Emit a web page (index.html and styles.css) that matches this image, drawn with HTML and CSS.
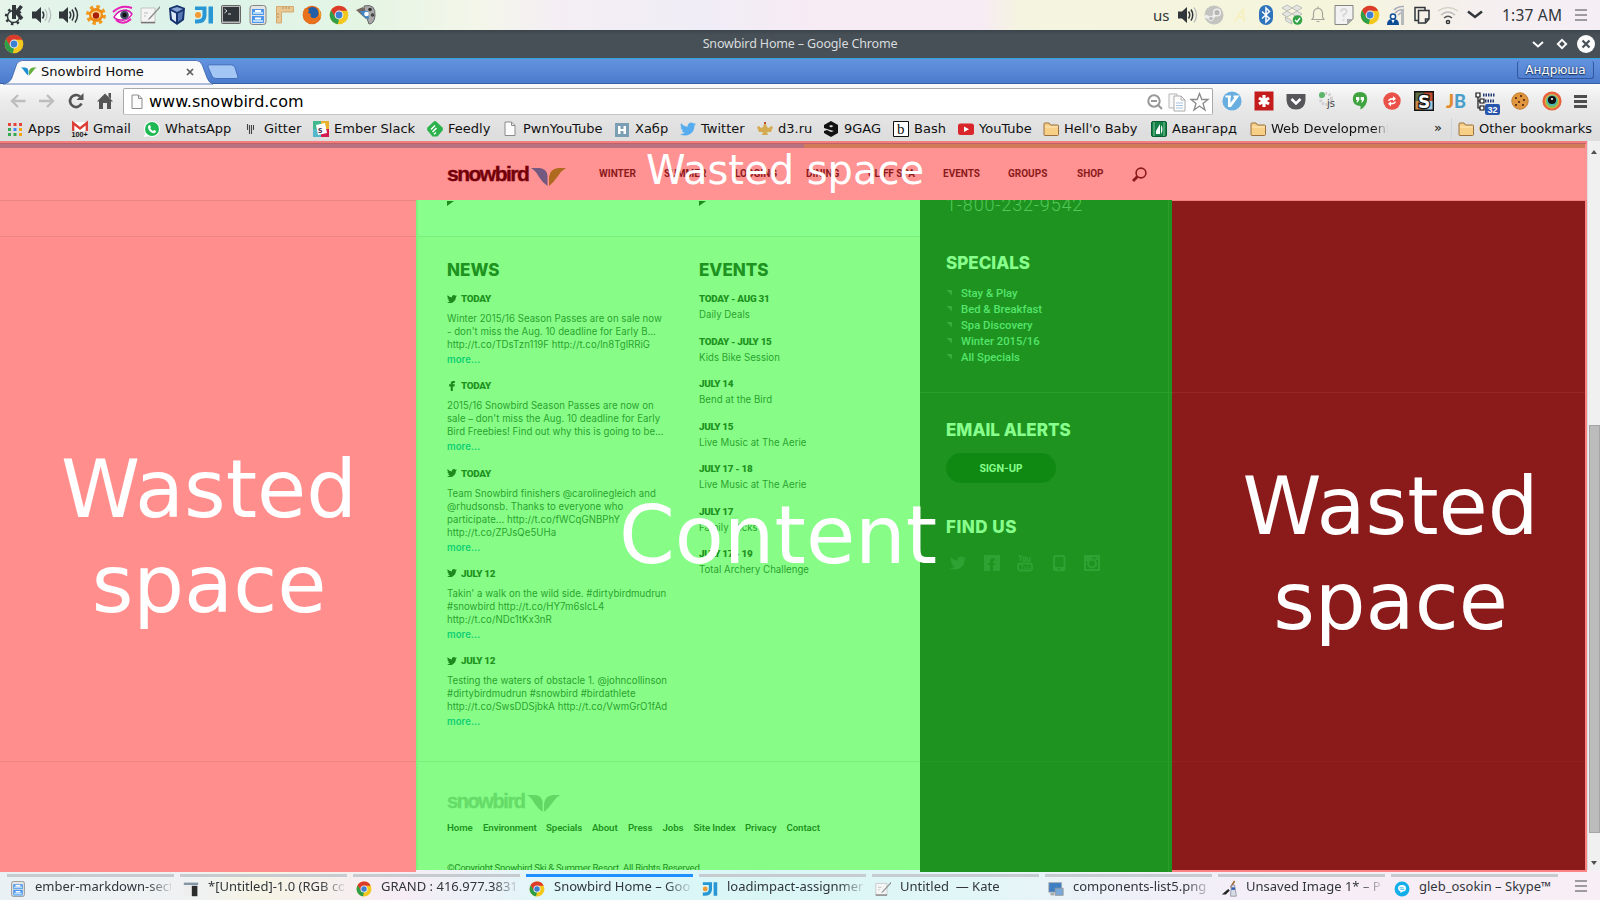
FILE: index.html
```html
<!DOCTYPE html>
<html lang="en">
<head>
<meta charset="utf-8">
<title>Snowbird Home</title>
<link rel="stylesheet" href="styles.css">
</head>
<body>
<svg class="defs" width="0" height="0">
  <defs>
    <symbol id="chrome" viewBox="0 0 20 20"><circle cx="10" cy="10" r="9.3" fill="#f3c81e"/><path d="M10 10 5.5 12.5 2 5.3A9.3 9.3 0 0 1 18.3 5.8L10 5.8Z" fill="#dc3b2c"/><path d="M2 5.3 6.4 12.4 10 14.2 8.8 19.2A9.3 9.3 0 0 1 2 5.3Z" fill="#2f9e48"/><circle cx="10" cy="10" r="4.4" fill="#f2f2f2"/><circle cx="10" cy="10" r="3.4" fill="#3d7fd0"/></symbol>
    <symbol id="speaker" viewBox="0 0 20 20"><path d="M0 6.500H4L9 2V18L4 13.500H0Z" fill="#31363b"/></symbol>
    <symbol id="tweet" viewBox="0 0 24 24"><path d="M24 4.6a10 10 0 0 1-2.8.8 5 5 0 0 0 2.1-2.7 10 10 0 0 1-3.1 1.2 4.9 4.9 0 0 0-8.4 4.5A14 14 0 0 1 1.700 3.200 4.900 4.900 0 0 0 3.200 9.700a5 5 0 0 1-2.200-.6 4.900 4.900 0 0 0 3.900 4.900 5 5 0 0 1-2.200.1 4.900 4.900 0 0 0 4.600 3.400A9.900 9.900 0 0 1 0 19.500 14 14 0 0 0 21.500 7.100 10 10 0 0 0 24 4.600z"/></symbol>
    <symbol id="wings" viewBox="0 0 38 20"><path d="M0 1H9Q16 2 16.500 9V19Q11 15 8 10Q5 4 0 1Z" class="wing-l"/><path d="M18 19V10Q19 2 27 1H35Q30 4 27 9Q23 15 18 19Z" class="wing-r"/></symbol>
    <symbol id="folder" viewBox="0 0 16 16"><path d="M1 13.500V3Q1 2 2 2H6L7.500 4H14.500Q15.500 4 15.500 5V13.500Q15.500 14.500 14.500 14.500H2Q1 14.500 1 13.500Z" fill="#f8cf86" stroke="#9a713e"/><path d="M2 6H15" stroke="#ffe9bd"/></symbol>
    <symbol id="cabinet" viewBox="0 0 20 20"><rect x="2" y=".5" width="16" height="19" rx="2.500" fill="#e4e4e4" stroke="#858585"/><path d="M4 4H16V10H4ZM4 11H16V18H4Z" fill="#4d98ea"/><path d="M5 8H15M5 16H15" stroke="#b4dafc" stroke-width="2"/><rect x="7" y="5" width="6" height="2" fill="#fff"/><rect x="7" y="12.500" width="6" height="2" fill="#fff"/></symbol>
    <symbol id="ji" viewBox="0 0 20 20"><path d="M1 1.500H12.500V11Q12 18.500 3 18.500H1V14.500H3Q8.500 14.500 8.500 10V5H1ZM14.500 1.500H19V18.500H14.500Z" fill="#2897d3"/><circle cx="4" cy="10" r="3" fill="#f29a33"/></symbol>
    <symbol id="kate" viewBox="0 0 20 20"><path d="M1 3H15V18H1Z" fill="#f5f5f5" stroke="#bababa" stroke-width=".8"/><path d="M1 17.500H15" stroke="#777" stroke-width="1.500"/><path d="M4 8H8M4 11H6" stroke="#bbb"/><path d="M20 1 9 13 7.500 15 10 14 20.500 2.500Z" fill="#8c8c8c"/></symbol>
    <symbol id="sheet" viewBox="0 0 12 16"><path d="M1 1H7.500L11 4.500V14.500H1Z" fill="#fbfbfb" stroke="#8c8c8c"/><path d="M7.500 1V4.500H11" fill="none" stroke="#8c8c8c"/></symbol>
  </defs>
</svg>

<div class="desktop">
  <header class="panel">
    <div class="launchers">
      <svg viewBox="0 0 20 20"><circle cx="8.500" cy="11.500" r="6" fill="none" stroke="#31363b" stroke-width="1.500"/><circle cx="8.500" cy="11.500" r="7.500" fill="none" stroke="#31363b" stroke-width="2.500" stroke-dasharray="2.500 3.400"/><path d="M7 0H11V14H7Z" fill="#31363b"/><path d="M16.500 1 11.500 7.500 17 14" fill="none" stroke="#31363b" stroke-width="3.500"/></svg>
      <svg viewBox="0 0 20 20"><use href="#speaker"/><path d="M10.500 6.500Q13 10 10.500 13.500" fill="none" stroke="#31363b" stroke-width="1.600"/><path d="M13 4Q17 10 13 16M16.500 2.500Q21 10 16.500 17.500" fill="none" stroke="#b9c0c0" stroke-width="1.300"/></svg>
      <svg viewBox="0 0 20 20"><use href="#speaker"/><path d="M10.500 6.500Q13 10 10.500 13.500M13 4.500Q16.500 10 13 15.500M16 2.500Q21 10 16 17.500" fill="none" stroke="#31363b" stroke-width="1.500"/></svg>
      <svg viewBox="0 0 20 20"><circle cx="10" cy="10" r="8" fill="none" stroke="#f09a20" stroke-width="4" stroke-dasharray="3.300 3"/><circle cx="10" cy="10" r="7" fill="#ee8a18"/><ellipse cx="10" cy="10" rx="5" ry="4" fill="#ffd98e"/><circle cx="10" cy="10.500" r="3.200" fill="#a92008"/></svg>
      <svg viewBox="0 0 20 20"><path d="M1 12Q5 5 13 5Q17 6 19 9Q15 16 8 15Q3 15 1 12Z" fill="#fff" stroke="#d91ab0" stroke-width="1.500"/><path d="M0 7Q8-1 19 3M3 15Q10 21 18 14" fill="none" stroke="#e620b8" stroke-width="2"/><circle cx="11.500" cy="10" r="4.300" fill="#454a68"/><circle cx="11.500" cy="10" r="2.200" fill="#111"/></svg>
      <svg viewBox="0 0 20 20"><use href="#kate"/></svg>
      <svg viewBox="0 0 20 20"><path d="M10 0 18 3 17 15 10 20 3 15 2 3Z" fill="#15336c"/><path d="M10 2 16 4 10 7 4 4Z" fill="#89a5d8"/><path d="M4 6 9 8.500V17L5 14Z" fill="#dce8f8"/><path d="M16 6 11 8.500V17L15 14Z" fill="#5878b5"/></svg>
      <svg viewBox="0 0 20 20"><use href="#ji"/></svg>
      <svg viewBox="0 0 20 20"><rect x=".5" y=".5" width="19" height="18" rx="1" fill="#bbb" stroke="#666"/><rect x="2" y="2" width="16" height="14.500" fill="#30363a"/><path d="M3.500 4 6 6 3.500 8M7 9H10" stroke="#ddd" fill="none"/></svg>
      <svg viewBox="0 0 20 20"><use href="#cabinet"/></svg>
      <svg viewBox="0 0 20 20"><path d="M1.500 1.500H18.500V7H6.500V18H1.500Z" fill="#e9c792" stroke="#d3ab70"/><path d="M8 2V4M11 2V4M14 2V4M2 9H4M2 12H4" stroke="#b8935a"/></svg>
      <svg viewBox="0 0 20 20"><circle cx="10" cy="10" r="9.300" fill="#e0641a"/><circle cx="10.500" cy="8" r="6" fill="#225fa8"/><path d="M1 7Q1 18 10 19Q18 18 18.500 8Q15 14 11 13Q7 12 9 9L6 8 7 5 3 3Z" fill="#e8731c"/><path d="M16 3Q20 8 18 13Q17 7 16 3Z" fill="#f7c02b"/></svg>
      <svg viewBox="0 0 20 20"><use href="#chrome"/></svg>
      <svg viewBox="0 0 20 20"><path d="M0 5 7 2 13 12 10 14Z" fill="#75685e"/><path d="M8 1Q20-2 19 11Q18 19 13 19L9 8Z" fill="#a8a8a8" stroke="#666"/><circle cx="14" cy="4.500" r="1.800" fill="#333"/><circle cx="16.500" cy="10" r="1.800" fill="#444"/><path d="M4 6H12L13 14Q8 14 4 6Z" fill="#3e86cc"/><circle cx="10.500" cy="9" r="2.300" fill="#fff"/></svg>
    </div>
    <div class="tray">
      <span class="layout-code">us</span>
      <div class="tray-icons">
        <svg viewBox="0 0 20 20"><use href="#speaker"/><path d="M10.500 6.500Q13 10 10.500 13.500M13 4.500Q16.500 10 13 15.500" fill="none" stroke="#31363b" stroke-width="1.500"/><path d="M16 2.500Q21 10 16 17.500" fill="none" stroke="#bbb" stroke-width="1.300"/></svg>
        <svg viewBox="0 0 20 20"><circle cx="10" cy="10" r="9.500" fill="#c3c3bf"/><path d="M1 11 7 13.500M8 13 13 8" stroke="#eee" stroke-width="3"/><circle cx="13" cy="7.500" r="3.300" fill="#b5b5b2" stroke="#eee" stroke-width="1.500"/><circle cx="7" cy="13.500" r="2.300" fill="#bbb" stroke="#eee"/></svg>
        <svg viewBox="0 0 20 20"><path d="M4 17 13 4 14 17M7 12H14" fill="none" stroke="#f6f0c2" stroke-width="2"/></svg>
        <svg viewBox="0 0 20 20"><rect x="3" y="0" width="14" height="20" rx="7" fill="#2e73bb"/><path d="M6 6.500 13.500 13.500 10 17V3L13.500 6.500 6 13.500" fill="none" stroke="#fff" stroke-width="1.500"/></svg>
        <svg viewBox="0 0 20 20"><path d="M5 0 10 3 5 6 0 3ZM15 0 20 3 15 6 10 3ZM5 6 10 9 5 12 0 9ZM15 6 20 9 15 12 10 9ZM3 12 9 15 10 19 4 16Z" fill="#e4e4e0" stroke="#aaa" stroke-width=".7"/><circle cx="15.500" cy="15" r="4.800" fill="#32a246"/><path d="M13 15 15 17 18 13" fill="none" stroke="#fff" stroke-width="1.400"/></svg>
        <svg viewBox="0 0 20 20"><path d="M4 14.500H16L14.500 12V8Q14 3.500 10 3.500Q6 3.500 5.500 8V12ZM8.500 16.500H11.500M10 3V1.500" fill="none" stroke="#a4a69b" stroke-width="1.200"/></svg>
        <svg viewBox="0 0 20 20"><path d="M1 .5H19V14L13 19.500H1Z" fill="#f2f2f2" stroke="#777" stroke-width=".9"/><path d="M7 7Q7 4 10 4Q13 4 12.500 7Q12 9 9.500 10V12M9.500 14V16" fill="none" stroke="#d8d8d8" stroke-width="2"/><path d="M13 19.500V14H19Z" fill="#aaa"/></svg>
        <svg viewBox="0 0 20 20"><use href="#chrome"/></svg>
        <svg viewBox="0 0 20 20"><path d="M8 5Q12 1 18 1.500M9 8Q13 4 18 4.500M12 10Q15 7 18 7.500" fill="none" stroke="#aab" stroke-width="1.500"/><path d="M15 4H18V20H15Z" fill="#b6babd"/><circle cx="7" cy="11.500" r="2.600" fill="#fff" stroke="#0b4c94" stroke-width="1.500"/><path d="M1 20Q1 13.500 7 14.500Q13 13.500 13 20Z" fill="#0b4c94"/><path d="M5.500 15H8.500L7 18.500Z" fill="#fff"/></svg>
        <svg viewBox="0 0 20 20"><path d="M6 15.500H3V2.500H13V5M6.500 5.500H17V14L13.500 18H6.500ZM17 14H13.500V18" fill="none" stroke="#31363b" stroke-width="1.500"/></svg>
        <svg viewBox="0 0 20 20"><path d="M0 6Q10-1 20 6" fill="none" stroke="#d2d2c6" stroke-width="1.500"/><path d="M3 10Q10 4 17 10" fill="none" stroke="#bbb" stroke-width="1.500"/><path d="M6 13Q10 9.500 14 13" fill="none" stroke="#555" stroke-width="1.500"/><circle cx="10" cy="17" r="1.600" fill="none" stroke="#31363b" stroke-width="1.500"/></svg>
      </div>
      <svg class="chevron" viewBox="0 0 16 10"><path d="M1 1.500 8 7 15 1.500" fill="none" stroke="#31363b" stroke-width="2.500"/></svg>
      <time class="clock">1:37 AM</time>
      <i class="burger"></i>
    </div>
  </header>

  <div class="titlebar">
    <svg class="title-icon" viewBox="0 0 20 20"><use href="#chrome"/></svg>
    <span class="title-text">Snowbird Home – Google Chrome</span>
    <svg class="win-buttons" viewBox="0 0 64 20"><path d="M2 8 7 12.500 12 8" fill="none" stroke="#fcfcfc" stroke-width="2"/><path d="M31 5.800 35.200 10 31 14.200 26.800 10Z" fill="none" stroke="#fcfcfc" stroke-width="1.900"/><circle cx="55" cy="10" r="9" fill="#fcfcfc"/><path d="M51.500 6.500 58.500 13.500M58.500 6.500 51.500 13.500" stroke="#475057" stroke-width="2.200"/></svg>
  </div>

  <div class="tabstrip">
    <div class="tab">
      <svg class="tab-shape" viewBox="0 0 214 26" preserveAspectRatio="none"><path d="M0 26Q7 25 9 20L14 6Q16 2.500 20 2.500H197Q201 2.500 203 7L208 20Q210 25 214 26Z" fill="#fafafa" stroke="#3a62aa" stroke-width=".8"/></svg>
      <svg class="tab-fav" viewBox="0 0 38 20"><use href="#wings"/></svg>
      <span class="tab-label">Snowbird Home</span>
      <svg class="tab-x" viewBox="0 0 8 8"><path d="M1 1 7 7M7 1 1 7" stroke="#5c5c5c" stroke-width="1.700"/></svg>
    </div>
    <svg class="new-tab" viewBox="0 0 32 16"><path d="M2.500 .8H24Q27 .8 28 3.500L31 13Q31.300 14.500 29 14.500H9Q6 14.500 5 12L1 3Q.5 .8 2.500 .8Z" fill="#a4c6f5" stroke="#426fbc"/></svg>
    <span class="profile">Андрюша</span>
  </div>

  <div class="chrome-bars">
    <div class="toolbar">
      <div class="nav-buttons">
        <svg viewBox="0 0 20 20"><path d="M17.500 10H4M10 4 4 10 10 16" fill="none" stroke="#bdbdbd" stroke-width="2.300"/></svg>
        <svg viewBox="0 0 20 20"><path d="M2 10H16M10 4 16 10 10 16" fill="none" stroke="#bdbdbd" stroke-width="2.300"/></svg>
        <svg viewBox="0 0 20 20"><path d="M15.500 12.500A6 6 0 1 1 14 5.500" fill="none" stroke="#555" stroke-width="2.700"/><path d="M17.500 2V9H10.500Z" fill="#555"/></svg>
        <svg viewBox="0 0 20 20"><path d="M10 2.500 18 10.500H16V18H12V12H8V18H4V10.500H2ZM13.500 2H16V8L13.500 5.500Z" fill="#555"/></svg>
      </div>
      <div class="omnibox">
        <svg class="omni-page" viewBox="0 0 12 16"><use href="#sheet"/></svg>
        <span class="url">www.snowbird.com</span>
        <svg class="omni-icons" viewBox="0 0 64 20"><circle cx="9" cy="9" r="5.700" fill="none" stroke="#989898" stroke-width="2"/><path d="M6 9H12M13 13 17 17" stroke="#989898" stroke-width="2"/><path d="M24 2H32V16H24Z" fill="#f8f8f8" stroke="#b5b5b5"/><path d="M29 4H36L40 8V19H29Z" fill="#fff" stroke="#aaa"/><path d="M36 4V8H40" fill="none" stroke="#aaa"/><path d="M31 11H38M31 13.500H38M31 16H38" stroke="#a8c4de"/><path d="M54.500 1.500 56.800 7.500H63L58 11.500 60 18 54.500 14 49 18 51 11.500 46 7.500H52.200Z" fill="#fff" stroke="#8a8a8a" stroke-width="1.300"/></svg>
      </div>
      <div class="extensions">
        <svg viewBox="0 0 20 20"><circle cx="10" cy="10" r="9.600" fill="#68aee0"/><path d="M3.500 4.500H9V6.500H8.500V12L12.500 6.500H11.500V4.500H17.500L9 16H6V6.500H3.500Z" fill="#fff"/></svg>
        <svg viewBox="0 0 20 20"><path d="M.5.500H19.500V19.500H.5Z" fill="#c41b1d"/><path d="M10 4V16M5 7 15 13M15 7 5 13" stroke="#fff" stroke-width="3.200"/></svg>
        <svg viewBox="0 0 20 20"><path d="M.5 3H19.500V9Q19 18.500 10 18.500Q1 18.500 .5 9Z" fill="#56565a"/><path d="M5.500 8 10 12.500 14.500 8" fill="none" stroke="#fff" stroke-width="2.500"/></svg>
        <svg viewBox="0 0 20 20"><circle cx="8" cy="8" r="5.500" fill="none" stroke="#cdcdcd" stroke-width="3" stroke-dasharray="2 1.500"/><circle cx="4" cy="4" r="3" fill="#5bb568"/><text x="9" y="15.500" class="mini-js">js</text></svg>
        <svg viewBox="0 0 20 20"><path d="M10 1Q17 1 17.200 8Q17 15 10.500 18.500V15Q3 15 2.800 8Q3 1 10 1Z" fill="#3fa33f"/><path d="M6 6H9.300V9L7.500 11.500H6.500L7.200 9H6ZM10.700 6H14V9L12.200 11.500H11.200L12 9H10.700Z" fill="#fff"/></svg>
        <svg viewBox="0 0 20 20"><circle cx="10" cy="10" r="8.700" fill="#ea5148"/><path d="M6 10Q6.500 7 11 7V5L14 7.800 11 10.300V8.700Q7.500 8.700 7.500 10ZM14 10.500Q13.500 13.500 9 13.500V15.500L6 12.700 9 10.200V11.800Q12.500 11.800 12.500 10.500Z" fill="#fff"/></svg>
        <svg viewBox="0 0 20 20"><path d="M1 1H10V10H1Z" fill="#5f6f49"/><path d="M10 1H19V10H10Z" fill="#c34c30"/><path d="M1 10H10V19H1Z" fill="#c78b48"/><path d="M10 10H19V19H10Z" fill="#a6c8de"/><path d="M.7.700H19.300V19.300H.7Z" fill="none" stroke="#111" stroke-width="1.400"/><text x="4" y="16.500" class="stylish-s">S</text></svg>
        <svg viewBox="0 0 20 20"><text x="0" y="17" class="jb-j">J</text><text x="8" y="17" class="jb-b">B</text></svg>
        <svg class="tree-ext" viewBox="0 0 26 24"><path d="M1 2H5V6H1ZM5 8H9V12H5ZM5 15H9V19H5ZM3 6V17H5M3 10H5" fill="#fff" stroke="#111" stroke-width="1.200"/><path d="M8 4H20M10 10H20" stroke="#223b74" stroke-width="3" stroke-dasharray="1.500 1"/><rect x="10" y="13" width="15" height="11" rx="2" fill="#2754ad"/><text x="12.500" y="22" class="badge-count">32</text></svg>
        <svg viewBox="0 0 20 20"><circle cx="10" cy="10" r="8.200" fill="#e0963f" stroke="#c67a2a"/><path d="M5 7H7M10 5H12M13 9H15M8 11H10M5 14H7M12 14H14" stroke="#6c3a12" stroke-width="2"/></svg>
        <svg viewBox="0 0 20 20"><circle cx="10" cy="10" r="8.300" fill="#7bc8a5" stroke="#e8603c" stroke-width="2.600"/><circle cx="10" cy="10.500" r="7.200" fill="#f0b03c"/><circle cx="10" cy="10.500" r="6.300" fill="#7fbf50"/><circle cx="10" cy="9.500" r="5.200" fill="#49b3c0"/><circle cx="10" cy="9" r="4.100" fill="#111"/><circle cx="10" cy="8" r="1.100" fill="#fff"/></svg>
        <i class="burger menu-button"></i>
      </div>
    </div>
    <div class="bookmarks">
      <span class="bm"><svg viewBox="0 0 16 16"><path d="M1 2h3v3H1zM6.500 2h3v3h-3z" fill="#e8413a"/><path d="M12 2h3v3h-3z" fill="#e8413a"/><path d="M1 7h3v3H1z" fill="#34a853"/><path d="M6.500 7h3v3h-3z" fill="#4285f4"/><path d="M12 7h3v3h-3z" fill="#f2a50a"/><path d="M1 12h3v3H1zM6.500 12h3v3h-3z" fill="#34a853"/><path d="M12 12h3v3h-3z" fill="#f2a50a"/></svg>Apps</span>
      <span class="bm"><svg viewBox="0 0 16 16"><path d="M0 1H16V10H0Z" fill="#fff"/><path d="M1.200 10V2L8 7.500 14.800 2V10" fill="none" stroke="#dc3c34" stroke-width="2.300"/><text x="-.5" y="16" class="gmail-count">100+</text></svg>Gmail</span>
      <span class="bm"><svg viewBox="0 0 16 16"><circle cx="8" cy="8" r="8" fill="#fff"/><path d="M0 16 1.500 11.500 5 15Z" fill="#fff"/><circle cx="8" cy="8" r="7" fill="#1eb954"/><path d="M4.500 4.500Q6 3 7 6L6.200 7.200Q7 9 9 10L10.300 9Q13 10 11.500 11.500Q9 13.500 6 10.500Q3 7 4.500 4.500Z" fill="#fff"/></svg>WhatsApp</span>
      <span class="bm"><svg viewBox="0 0 16 16"><path d="M4.500 3V9M6.500 4V13M8.500 4V13M10.500 4V9" stroke="#444" stroke-width="1.100"/></svg>Gitter</span>
      <span class="bm"><svg viewBox="0 0 16 16"><path d="M0 0H8V8H0Z" fill="#42b98b"/><path d="M8 0H16V8H8Z" fill="#eab22c"/><path d="M0 8H8V16H0Z" fill="#55b8ca"/><path d="M8 8H16V16H8Z" fill="#d5194e"/><path d="M3 4 12 2 14 12 5 14Z" fill="#fff"/><text x="5" y="12" class="slack-s">s</text></svg>Ember Slack</span>
      <span class="bm"><svg viewBox="0 0 16 16"><path d="M6.500.800Q8-.6 9.500.800L15.500 6.500Q16.500 8 15.500 9.500L10.500 15.500H5.500L.5 9.500Q-.5 8 .5 6.500Z" fill="#2bb24c"/><path d="M4 8.500 8 4.500M5.500 11 9.500 7M7 13.300 9 11.500" stroke="#fff" stroke-width="1.500"/></svg>Feedly</span>
      <span class="bm"><svg viewBox="0 0 16 16"><use href="#sheet" x="2" width="12" height="16"/></svg>PwnYouTube</span>
      <span class="bm"><svg viewBox="0 0 16 16"><path d="M1 2H15V16H1Z" fill="#7a9fb5"/><path d="M4 5H6.500V8H9.500V5H12V13H9.500V10H6.500V13H4Z" fill="#fff"/></svg>Хабр</span>
      <span class="bm"><svg class="tw-blue" viewBox="0 0 24 24"><use href="#tweet"/></svg>Twitter</span>
      <span class="bm"><svg viewBox="0 0 16 16"><path d="M0 6 2 5 4 7 6 6 7 3H9L10 6 12 7 14 5 16 6 14 11 10 11 11 14H5L6 11 2 11Z" fill="#d4ab50"/><path d="M7 1H9V3H7Z" fill="#c54832"/></svg>d3.ru</span>
      <span class="bm"><svg viewBox="0 0 16 16"><path d="M8 0 15 4V12L8 16 1 12V10L4 9 8 11 11 10 7 9 1 7V4Z" fill="#111"/><path d="M6 5 8 4 10.500 5 8 6.500Z" fill="#ddd"/></svg>9GAG</span>
      <span class="bm"><svg viewBox="0 0 16 16"><path d="M.5.500H15.500V15.500H.5Z" fill="#fff" stroke="#111"/><text x="4" y="13" class="bash-b">b</text></svg>Bash</span>
      <span class="bm"><svg viewBox="0 0 16 16"><rect y="2.500" width="16" height="11.500" rx="2.500" fill="#d8262a"/><path d="M6 5.500 11 8.300 6 11Z" fill="#fff"/></svg>YouTube</span>
      <span class="bm"><svg viewBox="0 0 16 16"><use href="#folder"/></svg>Hell'o Baby</span>
      <span class="bm"><svg viewBox="0 0 16 16"><rect x=".5" y=".5" width="15" height="15" rx="1.500" fill="#158046" stroke="#0c5d30"/><path d="M3 1V15M13 1V15" stroke="#7cc79a"/><path d="M9 3V13H5V10Z" fill="#fff"/><path d="M10 4Q13 8 10 13Z" fill="#fff"/></svg>Авангард</span>
      <span class="bm faded"><svg viewBox="0 0 16 16"><use href="#folder"/></svg>Web Development</span>
      <span class="more-marks">»</span>
      <span class="bm other"><svg viewBox="0 0 16 16"><use href="#folder"/></svg>Other bookmarks</span>
    </div>
  </div>

  <div class="viewport">
    <div class="page">
      <div class="top-edge"></div>
      <div class="stripe"></div>
      <div class="site-head">
        <div class="logo"><b>snowbird</b><svg viewBox="0 0 38 20"><use href="#wings"/></svg></div>
        <nav class="site-nav">
          <span>WINTER</span><span>SUMMER</span><span>LODGING</span><span>DINING</span><span>CLIFF SPA</span><span>EVENTS</span><span>GROUPS</span><span>SHOP</span>
        </nav>
        <svg class="search" viewBox="0 0 15 15"><circle cx="9" cy="6" r="4.900" fill="none" stroke="#8b1b1b" stroke-width="1.600"/><path d="M5.500 9.500 1 14" stroke="#8b1b1b" stroke-width="2.800"/></svg>
        <div class="note note-head">Wasted space</div>
      </div>

      <div class="columns">
        <div class="waste-left">
          <div class="band band-a"></div>
          <div class="band band-b"></div>
          <div class="note note-left">Wasted<br>space</div>
        </div>

        <div class="light">
          <div class="teaser"><i class="tick"></i><i class="tick"></i></div>
          <div class="feeds">
            <section class="news">
              <h2>NEWS</h2>
              <article><h3><svg viewBox="0 0 24 24"><use href="#tweet"/></svg>TODAY</h3><p>Winter 2015/16 Season Passes are on sale now<br>- don't miss the Aug. 10 deadline for Early B...<br>http://t.co/TDsTzn119F http://t.co/ln8TglRRiG</p><a>more...</a></article>
              <article><h3><svg viewBox="0 0 24 24"><path d="M9 24V13H5V8H9V5Q9 0 15 0H19V5H16Q14 5 14 7V8H19L18 13H14V24Z"/></svg>TODAY</h3><p>2015/16 Snowbird Season Passes are now on<br>sale – don't miss the Aug. 10 deadline for Early<br>Bird Freebies! Find out why this is going to be...</p><a>more...</a></article>
              <article><h3><svg viewBox="0 0 24 24"><use href="#tweet"/></svg>TODAY</h3><p>Team Snowbird finishers @carolinegleich and<br>@rhudsonsb. Thanks to everyone who<br>participate... http://t.co/fWCqGNBPhY<br>http://t.co/ZPJsQe5UHa</p><a>more...</a></article>
              <article><h3><svg viewBox="0 0 24 24"><use href="#tweet"/></svg>JULY 12</h3><p>Takin' a walk on the wild side. #dirtybirdmudrun<br>#snowbird http://t.co/HY7m6slcL4<br>http://t.co/NDc1tKx3nR</p><a>more...</a></article>
              <article><h3><svg viewBox="0 0 24 24"><use href="#tweet"/></svg>JULY 12</h3><p>Testing the waters of obstacle 1. @johncollinson<br>#dirtybirdmudrun #snowbird #birdathlete<br>http://t.co/SwsDDSjbkA http://t.co/VwmGrO1fAd</p><a>more...</a></article>
            </section>
            <section class="events">
              <h2>EVENTS</h2>
              <div class="event"><h3>TODAY - AUG 31</h3><p>Daily Deals</p></div>
              <div class="event"><h3>TODAY - JULY 15</h3><p>Kids Bike Session</p></div>
              <div class="event"><h3>JULY 14</h3><p>Bend at the Bird</p></div>
              <div class="event"><h3>JULY 15</h3><p>Live Music at The Aerie</p></div>
              <div class="event"><h3>JULY 17 - 18</h3><p>Live Music at The Aerie</p></div>
              <div class="event"><h3>JULY 17</h3><p>Family Flicks</p></div>
              <div class="event"><h3>JULY 17 - 19</h3><p>Total Archery Challenge</p></div>
            </section>
          </div>
          <footer class="site-foot">
            <div class="logo pale"><b>snowbird</b><svg viewBox="0 0 38 20"><use href="#wings"/></svg></div>
            <nav class="foot-nav"><span>Home</span><span>Environment</span><span>Specials</span><span>About</span><span>Press</span><span>Jobs</span><span>Site Index</span><span>Privacy</span><span>Contact</span></nav>
            <p class="copyright">©Copyright Snowbird Ski &amp; Summer Resort. All Rights Reserved.</p>
          </footer>
        </div>

        <aside class="dark">
          <div class="dark-top">
            <p class="phone">1-800-232-9542</p>
            <h2>SPECIALS</h2>
            <ul><li>Stay &amp; Play</li><li>Bed &amp; Breakfast</li><li>Spa Discovery</li><li>Winter 2015/16</li><li>All Specials</li></ul>
          </div>
          <div class="dark-mid">
            <h2>EMAIL ALERTS</h2>
            <span class="signup">SIGN-UP</span>
            <h2 class="find">FIND US</h2>
            <div class="social">
              <svg viewBox="0 0 24 24"><use href="#tweet"/></svg>
              <svg viewBox="0 0 16 16"><path d="M0 0H16V16H9V10H11V8H9V6.500Q9 5.500 11 5.500V3Q6 2.500 6 6V8H4V10H6V16H0Z"/></svg>
              <svg viewBox="0 0 16 16"><path d="M2 0 3.500 3V6M5 0 3.500 3M6.500 2.500H8.500V6H6.500ZM10.500 2V6H13V2" fill="none" stroke="#2fa234" stroke-width="1.400"/><rect x="1" y="8.500" width="14" height="7" rx="2.500" fill="none" stroke="#2fa234" stroke-width="1.800"/><path d="M4 10.500H6.500M5.200 10.500V14M8 11V13.500H9.500M11 10.500V13.500H12.500" fill="none" stroke="#2fa234"/></svg>
              <svg viewBox="0 0 16 16"><rect x="3" y="1" width="10.500" height="14.300" rx="1.500" fill="none" stroke="#2fa234" stroke-width="2"/><path d="M3 12H14V15H3Z"/><circle cx="8.200" cy="14" r="1" fill="#1e9320"/></svg>
              <svg viewBox="0 0 16 16"><path d="M1 1H15V15H1Z" fill="none" stroke="#2fa234" stroke-width="2"/><circle cx="8" cy="8.500" r="4" fill="none" stroke="#2fa234" stroke-width="2"/><path d="M1 1H10L5 6H1ZM11.500 2.500H14V5H11.500Z"/></svg>
            </div>
          </div>
          <div class="dark-foot"></div>
        </aside>

        <div class="waste-right">
          <div class="band band-c"></div>
          <div class="band band-d"></div>
          <div class="note note-right">Wasted<br>space</div>
        </div>
        <div class="note note-content">Content</div>
      </div>
    </div>
    <div class="scrollbar"><i class="up"></i><i class="thumb"></i><i class="down"></i></div>
  </div>

  <footer class="taskbar">
    <div class="task"><svg viewBox="0 0 20 20"><use href="#cabinet"/></svg><span>ember-markdown-sect</span></div>
    <div class="task"><svg viewBox="0 0 20 20"><path d="M1 2H19V5H1Z" fill="#8296a5"/><path d="M1 5H11V18H1Z" fill="#eee"/><path d="M11 6H18V19H11Z" fill="#2c2c2c"/></svg><span>*[Untitled]-1.0 (RGB co</span></div>
    <div class="task"><svg viewBox="0 0 20 20"><use href="#chrome"/></svg><span>GRAND : 416.977.3831</span></div>
    <div class="task active"><svg viewBox="0 0 20 20"><use href="#chrome"/></svg><span>Snowbird Home – Goog</span></div>
    <div class="task"><svg viewBox="0 0 20 20"><use href="#ji"/></svg><span>loadimpact-assignment</span></div>
    <div class="task"><svg viewBox="0 0 20 20"><use href="#kate"/></svg><span>Untitled&nbsp; — Kate</span></div>
    <div class="task"><svg viewBox="0 0 20 20"><path d="M1 2H17V14H1Z" fill="#3e7fc4" stroke="#aaa"/><path d="M9 9H19V18H9Z" fill="#78a8d8" stroke="#999"/><path d="M3 15H8V18H3Z" fill="#aaa"/></svg><span>components-list5.png [</span></div>
    <div class="task"><svg viewBox="0 0 20 20"><path d="M17 0 12 8" stroke="#a76a2c" stroke-width="2"/><path d="M13 5H17L19 17V19H12V17Z" fill="#d7dce5" stroke="#667" stroke-width=".7"/><path d="M13 8H17.500V11H13Z" fill="#2c5ab0"/><path d="M1 17 9 10 11 12 6 17Z" fill="#222"/></svg><span>Unsaved Image 1* – Pin</span></div>
    <div class="task"><svg viewBox="0 0 20 20"><circle cx="10" cy="10" r="9.300" fill="#12aeea"/><path d="M5 9Q5 5 10 5Q15 5 15 9Q15 13 11 13L8 15V13Q5 12 5 9Z" fill="#fff"/><path d="M7 8.500H12M8 10.500H13" stroke="#12aeea"/></svg><span class="whole">gleb_osokin – Skype™</span></div>
    <i class="burger"></i>
  </footer>
</div>
</body>
</html>
```

FILE: styles.css
```css
* { box-sizing: border-box; }
body { margin: 0; width: 1600px; height: 900px; overflow: hidden; background: #fff; font-family: "DejaVu Sans", sans-serif; }
svg { display: block; flex: none; overflow: visible; }
h2, h3, p, ul { margin: 0; padding: 0; }
.defs { position: absolute; }
.desktop { display: grid; grid-template-rows: 30px 28px 26px 57px 729px 30px; width: 1600px; height: 900px; }

/* desktop panel */
.panel { display: flex; justify-content: space-between; align-items: center; background: linear-gradient(90deg, #e6f4ea 0, #dcf3ea 180px, #e4f5e4 360px, #f4f6ea 480px, #f4eef4 560px, #f0edf6 700px, #f7ebf4 820px, #f7ebf4 980px, #f5f4e0 1020px, #f5f5dc 1340px, #f6eff0 1480px, #f5eef5 1600px); }
.launchers { display: flex; gap: 7px; padding-left: 5px; }
.launchers svg, .tray-icons svg { width: 20px; height: 20px; }
.tray { display: flex; align-items: center; font-family: "Noto Sans", sans-serif; color: #31363b; }
.layout-code { width: 25px; font-size: 15px; line-height: 28px; }
.tray-icons { display: flex; gap: 6px; }
.chevron { width: 16px; height: 10px; margin-left: 9px; }
.clock { width: 73px; margin-left: 19px; font-size: 15.5px; line-height: 26px; letter-spacing: .2px; white-space: nowrap; }
.burger { display: block; flex: none; width: 12px; height: 12px; margin-right: 13px; border: solid #9d9aa0; border-width: 2px 0; background: linear-gradient(#9d9aa0, #9d9aa0) 0 3px / 12px 2px no-repeat; }
.burger.menu-button { width: 13px; height: 13px; border-color: #4e4e4e; border-width: 3px 0; background: linear-gradient(#4e4e4e, #4e4e4e) 0 2px / 13px 3px no-repeat; margin: 0; }

/* window frame */
.titlebar { display: grid; grid-template-columns: 100px 1fr 100px; align-items: center; background: linear-gradient(#3d454c, #475057 5px); color: #d9dcde; font: 12.500px/28px "Noto Sans", sans-serif; }
.title-icon { width: 20px; height: 20px; margin-left: 4px; }
.title-text { text-align: center; letter-spacing: -.15px; }
.win-buttons { width: 64px; height: 20px; margin-left: 31px; }
.tabstrip { display: flex; align-items: flex-start; border-top: 1px solid #32a4de; border-bottom: 1px solid #3560a8; background: linear-gradient(#6494e0, #4b7bcb); }
.tab { position: relative; display: flex; align-items: center; width: 211px; height: 25px; }
.tab-shape { position: absolute; left: 3px; top: -1px; width: 210px; height: 26px; }
.tab-fav { position: relative; width: 17px; height: 9px; margin-left: 21px; }
.tab-label { position: relative; width: 145px; margin-left: 3px; font-size: 13px; line-height: 25px; color: #111; }
.tab-x { position: relative; width: 8px; height: 8px; }
.new-tab { width: 32px; height: 16px; margin: 5px 0 0 -4px; }
.profile { width: 77px; height: 18px; margin: 2px 6px 0 auto; border: 1px solid #31589e; border-top: 0; border-radius: 3px; color: #fff; font-size: 12px; line-height: 18px; text-align: center; text-shadow: 0 0 2px #17315f, 0 1px 1px #17315f; }

.chrome-bars { background: linear-gradient(#fafafa, #ebebeb 18px, #dedede 50px); }
.toolbar { display: flex; height: 34px; align-items: flex-start; padding-top: 4px; }
.nav-buttons { display: flex; gap: 9px; width: 123px; padding: 3px 0 0 8px; }
.nav-buttons svg { width: 20px; height: 20px; }
.omnibox { display: flex; align-items: center; width: 1090px; height: 27px; border: 1px solid #a9a9a9; border-bottom-color: #c4c4c4; border-radius: 2px; background: #fff; }
.omni-page { width: 12px; height: 16px; margin-left: 7px; }
.url { margin-left: 6px; font-size: 16px; line-height: 25px; color: #000; }
.omni-icons { width: 64px; height: 20px; margin: 0 3px 0 auto; }
.extensions { display: flex; align-items: center; gap: 12px; padding-left: 9px; height: 27px; }
.extensions svg { width: 20px; height: 20px; margin-top: -1px; }
.extensions .tree-ext { width: 26px; height: 24px; margin: 3px -3px 0; }
.mini-js { font: 10px "DejaVu Sans", sans-serif; fill: #444; }
.stylish-s { font: bold 17px "DejaVu Sans", sans-serif; fill: #fff; stroke: #111; stroke-width: 2.500px; paint-order: stroke; }
.jb-j { font: 900 19px Lato, sans-serif; fill: #e38b2d; }
.jb-b { font: 900 18px Lato, sans-serif; fill: #4a9fcb; }
.badge-count { font: bold 9px "Liberation Sans", sans-serif; fill: #fff; }
.bookmarks { display: grid; grid-template-columns: 65px 72px 99px 70px 114px 75px 112px 66px 77px 66px 70px 65px 85px 108px 99px 184px 17px 1fr; height: 23px; padding-left: 7px; font-size: 13px; line-height: 20px; color: #111; }
.bm { display: flex; align-items: center; gap: 5px; height: 21px; white-space: nowrap; min-width: 0; }
.bm svg { width: 16px; height: 16px; }
.faded { width: 138px; overflow: hidden; -webkit-mask-image: linear-gradient(90deg, #000 124px, transparent 138px); mask-image: linear-gradient(90deg, #000 124px, transparent 138px); }
.other { padding-left: 6px; border-left: 1px solid #ccd4dc; }
.tw-blue { fill: #55acee; }
.gmail-count { font: bold 7.200px "Liberation Sans", sans-serif; fill: #111; }
.slack-s { font: bold 10px Lato, sans-serif; fill: #40233f; }
.bash-b { font: 15px "Liberation Serif", serif; fill: #111; }

/* web page */
.viewport { display: flex; position: relative; z-index: 1; }
.page { width: 1587px; }
.top-edge { height: 2px; background: #f47e7f; }
.stripe { height: 5px; border-top: 1px solid #bf6268; border-right: 2px solid #ff8f90; background: linear-gradient(90deg, #b7717f 803px, #d37a5a 805px); }
.site-head { position: relative; display: flex; height: 52px; align-items: center; padding-left: 447px; background: #ff9292; }
.logo { --l: #73597f; --r: #b06a20; display: flex; align-items: center; width: 152px; color: #730009; font: bold 21px/24px "Liberation Sans", sans-serif; letter-spacing: -1.500px; -webkit-text-stroke: .4px; }
.logo svg { width: 38px; height: 20px; margin: 5px 0 0 3px; }
.logo.pale { --l: #62d864; --r: #62d864; color: #66dc68; }
.wing-l { fill: var(--l, #1b8fd1); }
.wing-r { fill: var(--r, #62ad3b); }
.site-nav { display: grid; grid-template-columns: 65px 71px 71px 62px 75px 65px 69px 55px; color: #8b1b1b; font: bold 10px/14px Roboto, sans-serif; white-space: nowrap; }
.search { width: 15px; height: 15px; margin-top: 1px; }
.columns { position: relative; display: grid; grid-template-columns: 416px 504px 252px 415px; height: 670px; }
.waste-left { position: relative; height: 672px; background: #ff8e8c; border-top: 1px solid #ec8585; }
.band-a { height: 36px; border-bottom: 1px solid #ed8583; background: #ff9290; }
.band-b { height: 525px; border-bottom: 1px solid #ed8583; }
.light { overflow: hidden; height: 670px; background: #87fd88; border-left: 2px solid #7df27e; }
.teaser { display: grid; grid-template-columns: 252px 1fr; height: 37px; padding: 1px 0 0 29px; border-bottom: 1px solid #7cee7e; background: #88ff8d; }
.tick { width: 7px; height: 5px; background: #1e8a1e; clip-path: polygon(0 0, 100% 0, 0 100%); }
.feeds { display: grid; grid-template-columns: 252px 1fr; height: 525px; padding: 23px 0 0 29px; border-bottom: 1px solid #7cee7e; }
h2 { font: 800 17px/20px Inter, sans-serif; }
.feeds h2 { margin-bottom: 12px; color: #1e9320; }
h3 { display: flex; align-items: center; gap: 4px; color: #1e9320; font: 900 9.900px/13px Roboto, sans-serif; white-space: nowrap; letter-spacing: -.3px; }
h3 svg { width: 10px; height: 10px; fill: #1e8a1e; }
.feeds p, .feeds a { display: block; color: #2ba32e; font: 9.650px/13px Inter, sans-serif; letter-spacing: .03px; white-space: nowrap; }
.news article { padding-bottom: 13.300px; }
.news p { margin: 7px 0 2px; }
.news a { color: #0fcf72; font-weight: 600; }
.event { height: 42.500px; }
.event p { margin-top: 3px; }
.site-foot { padding: 27px 0 0 29px; }
.site-foot .logo { font-size: 20px; letter-spacing: -1.400px; }
.site-foot .logo svg { width: 36px; height: 19px; margin-left: 2px; }
.foot-nav { display: grid; grid-template-columns: 36px 63px 46px 36px 34.500px 31px 51.500px 41.500px 50px; margin-top: 8px; color: #1e9320; font: 600 9.700px/14px Roboto, sans-serif; letter-spacing: -.1px; white-space: nowrap; }
.feeds + .site-foot .copyright { margin-top: 26px; color: #1e9320; font: 9.600px/14px Roboto, sans-serif; letter-spacing: -.3px; white-space: nowrap; }
.dark { background: #1e9320; color: #88ff8d; box-shadow: inset -3px 0 #1e9320, inset -4px 0 #2a9d2c; overflow: hidden; }
.dark-top { height: 193px; padding-left: 26px; border-bottom: 1px solid #2a9d2c; overflow: hidden; }
.phone { height: 20px; margin-top: -5px; color: #52c957; font: 300 18px/20px Roboto, sans-serif; letter-spacing: .85px; white-space: nowrap; }
.dark-top h2 { margin: 38px 0 13px; }
.dark ul { list-style: none; }
.dark li { display: flex; align-items: center; gap: 9px; height: 16px; color: #54e56b; font: 500 11.300px/16px Roboto, sans-serif; }
.dark li::before { content: ""; width: 6px; height: 6px; margin-top: -3px; background: #38ab3b; clip-path: polygon(0 0, 100% 0, 100% 100%); }
.dark-mid { height: 369px; padding: 27px 0 0 26px; border-bottom: 1px solid #239725; }
.signup { display: block; width: 110px; height: 30px; margin: 13px 0 34px; border-radius: 15px; background: #108913; font: 700 10px/30px Inter, sans-serif; text-align: center; }
.find { letter-spacing: .5px; }
.social { display: flex; gap: 17.500px; margin: 18px 0 0 4px; fill: #2fa234; }
.social svg { width: 16px; height: 16px; }
.waste-right { position: relative; height: 672px; border-top: 1px solid #f08080; border-right: 2px solid #fb8485; border-bottom: 2px solid #fb8485; background: #8b1b1b; }
.band-c { height: 192px; border-bottom: 1px solid #962626; }
.band-d { height: 369px; border-bottom: 1px solid #912121; }
.scrollbar { display: flex; flex-direction: column; width: 13px; padding-top: 2px; border-left: 1px solid #ddd; background: #f0f0f0; align-items: center; }
.up, .down { border: solid transparent; border-width: 0 3.500px 4px; border-bottom-color: #505050; margin-top: 7px; }
.thumb { width: 11px; height: 408px; margin: 271px 0 28px; border: 1px solid #a6a6a6; background: #bcbcbc; }
.down { border-width: 4px 3.500px 0; border-top-color: #505050; margin-top: 0; }

/* annotations lying over the page */
.note { position: absolute; color: #fff; font: 80px/95px "DejaVu Sans", sans-serif; text-align: center; white-space: nowrap; }
.note-head { left: 646px; top: -1px; font-size: 40px; line-height: 47px; }
.note-left { left: 1px; width: 416px; top: 241px; }
.note-right { left: 2px; width: 433px; top: 258px; }
.note-content { left: 619px; top: 288px; }

/* task list */
.taskbar { display: flex; gap: 6px; padding: 4px 0 0 7px; background: linear-gradient(90deg, #eaf1f4 0, #f0f2f2 200px, #f6f4e4 260px, #f6ecf5 400px, #dff7f9 560px, #d9f6f5 760px, #e2f6f7 980px, #f0eff8 1150px, #f7edf6 1350px, #f7eef6 1600px); }
.task { display: flex; align-items: center; width: 167px; height: 26px; padding-left: 3px; border-top: 3px solid #c6cbd0; }
.task.active { border-top-color: #1e90ff; }
.task svg { width: 16px; height: 16px; margin-top: 1px; }
.task span { width: 136px; margin: -6px 0 0 9px; overflow: hidden; white-space: nowrap; color: #31363b; font: 13px/20px "Noto Sans", sans-serif; -webkit-mask-image: linear-gradient(90deg, #000 112px, transparent 140px); mask-image: linear-gradient(90deg, #000 112px, transparent 140px); }
.task .whole { -webkit-mask-image: none; mask-image: none; }
.taskbar .burger { margin: 6px 0 0 11px; }
```
